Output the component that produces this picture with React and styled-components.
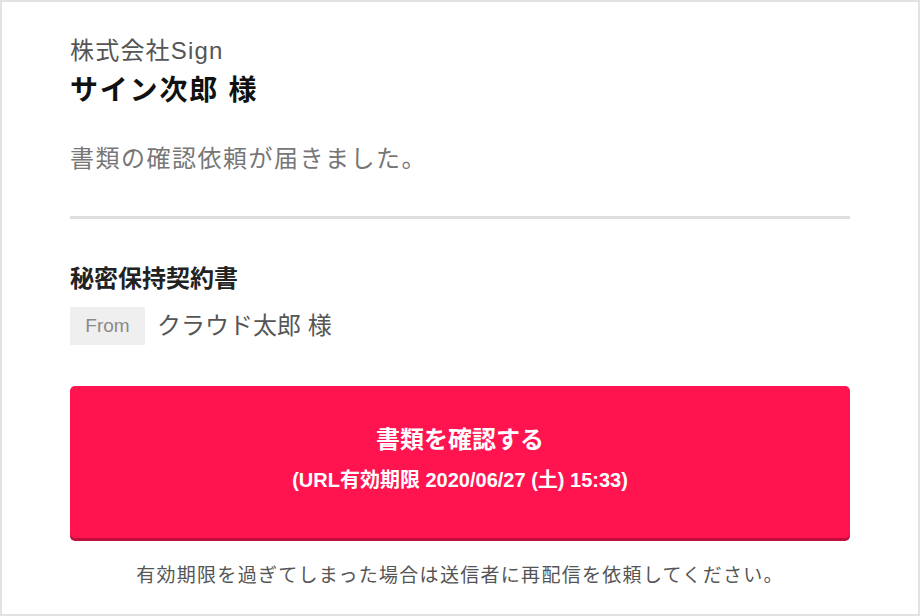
import React from 'react'
import styled, { createGlobalStyle } from 'styled-components'

const GlobalStyle = createGlobalStyle`
  html, body {
    margin: 0;
    padding: 0;
    background: #fff;
  }
  body {
    font-family: "Liberation Sans", "Noto Sans CJK JP", sans-serif;
  }
`

const mail = {
  company: '株式会社Sign',
  recipient: 'サイン次郎 様',
  message: '書類の確認依頼が届きました。',
  document: '秘密保持契約書',
  sender: 'クラウド太郎 様',
  action: '書類を確認する',
  expires: '(URL有効期限 2020/06/27 (土) 15:33)',
  note: '有効期限を過ぎてしまった場合は送信者に再配信を依頼してください。',
}

export default function App() {
  return (
    <>
      <GlobalStyle />
      <Frame>
        <Company>{mail.company}</Company>
        <Recipient>{mail.recipient}</Recipient>
        <Message>{mail.message}</Message>
        <Divider />
        <DocTitle>{mail.document}</DocTitle>
        <FromRow>
          <FromBadge>From</FromBadge>
          <Sender>{mail.sender}</Sender>
        </FromRow>
        <ConfirmButton>
          <ButtonLabel>{mail.action}</ButtonLabel>
          <ButtonSub>{mail.expires}</ButtonSub>
        </ConfirmButton>
        <Note>{mail.note}</Note>
      </Frame>
    </>
  )
}

const Frame = styled.div`
  box-sizing: border-box;
  width: 920px;
  height: 616px;
  border: 2px solid #e2e2e2;
  padding: 34px 68px 0;
  display: flex;
  flex-direction: column;
  overflow: hidden;
`

const Company = styled.div`
  font-size: 24px;
  line-height: 30px;
  letter-spacing: 1.2px;
  color: #555;
`

const Recipient = styled.div`
  margin-top: 6px;
  font-size: 28px;
  line-height: 38px;
  font-weight: 700;
  letter-spacing: 1.8px;
  color: #111;
`

const Message = styled.div`
  margin-top: 31px;
  font-size: 24px;
  line-height: 36px;
  letter-spacing: 1.5px;
  color: #777;
`

const Divider = styled.hr`
  margin: 39px 0 0;
  border: 0;
  height: 3px;
  background: #dedede;
`

const DocTitle = styled.div`
  margin-top: 44px;
  font-size: 24px;
  line-height: 32px;
  font-weight: 700;
  color: #222;
`

const FromRow = styled.div`
  margin-top: 12px;
  display: flex;
  align-items: center;
  gap: 12px;
`

const FromBadge = styled.span`
  box-sizing: border-box;
  width: 75px;
  height: 38px;
  display: flex;
  align-items: center;
  justify-content: center;
  background: #efefef;
  color: #8a8a8a;
  font-size: 19px;
`

const Sender = styled.span`
  font-size: 24px;
  line-height: 32px;
  color: #555;
`

const ConfirmButton = styled.div`
  margin-top: 41px;
  height: 152px;
  border-radius: 5px;
  background: #ff1450;
  box-shadow: 0 3px 0 #c10f3f;
  display: flex;
  flex-direction: column;
  align-items: center;
  justify-content: center;
  gap: 12px;
  padding-bottom: 6px;
  box-sizing: border-box;
  color: #fff;
  font-weight: 700;
  cursor: pointer;
`

const ButtonLabel = styled.div`
  font-size: 24px;
  line-height: 30px;
`

const ButtonSub = styled.div`
  font-size: 20px;
  line-height: 26px;
`

const Note = styled.div`
  margin-top: 25px;
  text-align: center;
  font-size: 19px;
  line-height: 26px;
  letter-spacing: 1.3px;
  color: #555;
`
